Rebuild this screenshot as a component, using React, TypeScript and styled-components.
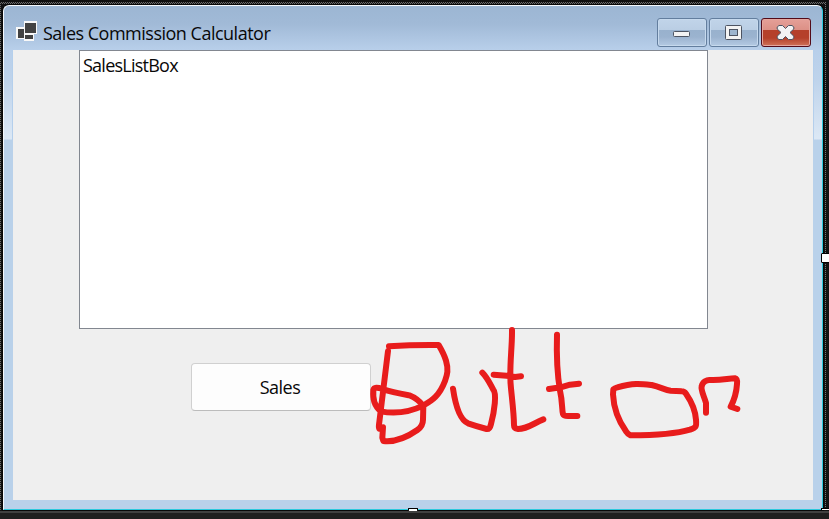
import React from 'react';
import styled, { createGlobalStyle } from 'styled-components';

const GlobalStyle = createGlobalStyle`
  * { box-sizing: border-box; }
  body { margin: 0; background: #1f1f1f; font-family: "Open Sans", "Noto Sans", sans-serif; color: #080808; }
`;

const Designer = styled.main`
  position: relative;
  width: 829px;
  height: 519px;
  overflow: hidden;
  padding: 5px 0 0 3px;
  background: #1f1f1f;
`;

const dots = 'repeating-conic-gradient(#6a6a6a 0 25%, #161616 0 50%) 0 0 / 2px 2px';

const SelectionEdge = styled.div<{ $side: 'top' | 'left' | 'right' }>`
  position: absolute;
  background: ${dots};
  ${({ $side }) =>
    $side === 'top'
      ? 'left: 0; top: 2px; width: 826px; height: 2px;'
      : $side === 'left'
        ? 'left: 0; top: 2px; width: 1px; height: 508px;'
        : 'left: 825px; top: 2px; width: 1px; height: 508px; background: repeating-linear-gradient(#777 0 1px, #161616 1px 2px);'}
`;

const BottomEdge = styled.div`
  position: absolute;
  left: 0;
  top: 510px;
  width: 829px;
  height: 3px;
  background: linear-gradient(#111 0 1px, #404040 1px);
`;

const DarkMargin = styled.div`
  position: absolute;
  inset: 0 0 9px 0;
  background: #111;
`;

const WindowFrame = styled.section`
  position: relative;
  display: flex;
  flex-direction: column;
  width: 820px;
  height: 505px;
  border: 1px solid #f4f8fc;
  border-right-color: #2bc8dc;
  border-bottom-color: #2bc8dc;
  border-radius: 6px 6px 0 0;
  padding: 0 9px 9px 9px;
  background:
    linear-gradient(#b4cfec, #b4cfec) 8px 44px / 1px 90px no-repeat,
    linear-gradient(#b4cfec, #b4cfec) 809px 44px / 1px 90px no-repeat,
    linear-gradient(#9cb6d3 0, #a1bad7 18px, #b8cfea 44px, #bed3eb 74px, #dce8f5 133px, #b9d1ea 134px);
  box-shadow: 0 0 0 1px #080808;
`;

const TitleBar = styled.header`
  display: flex;
  height: 44px;
  flex: none;
  padding-left: 3px;
`;

const FormIcon = styled.svg`
  width: 21px;
  height: 20px;
  margin-top: 15px;
  flex: none;
`;

const Title = styled.h1`
  margin: 14px auto 0 6px;
  font-size: 18px;
  line-height: 26px;
  font-weight: 400;
  letter-spacing: -0.5px;
  white-space: nowrap;
`;

const Controls = styled.div`
  display: flex;
  gap: 2px;
  margin: 12px 2px 0 0;
`;

const ControlButton = styled.button<{ $danger?: boolean }>`
  width: 50px;
  height: 29px;
  padding: 0;
  display: flex;
  border: 1px solid ${({ $danger }) => ($danger ? '#530b19' : '#637e9e')};
  border-radius: 3px;
  box-shadow: inset 0 0 0 1px ${({ $danger }) => ($danger ? '#e4a69e' : '#c6d9ed')};
  background: ${({ $danger }) =>
    $danger
      ? 'linear-gradient(#e5a098 0, #dc9086 11px, #b5402a 11px, #b5402a 19px, #cf7258 27px)'
      : 'linear-gradient(#c1d4e9 0, #bacee4 11px, #98b1cd 11px, #9bb3cf 18px, #b4cae3 27px)'};
  svg { width: 48px; height: 27px; display: block; }
`;

const Form = styled.div`
  flex: none;
  width: 800px;
  height: 450px;
  display: flex;
  flex-direction: column;
  background: #efefef;
`;

const ListBox = styled.div`
  width: 629px;
  height: 279px;
  margin-left: 66px;
  padding: 1px 3px;
  border: 1px solid #828790;
  background: #fff;
  font-size: 18px;
  line-height: 26px;
  letter-spacing: -0.76px;
`;

const SalesButton = styled.button`
  width: 180px;
  height: 48px;
  margin: 34px 0 0 178px;
  padding: 0 2px 0 0;
  border: 1px solid #d0d0d0;
  border-bottom-color: #bcbcbc;
  border-radius: 4px;
  background: #fdfdfd;
  color: #080808;
  font: 18px/26px "Open Sans", "Noto Sans", sans-serif;
  letter-spacing: -0.5px;
`;

const Handle = styled.i<{ $bottom?: boolean }>`
  position: absolute;
  left: ${({ $bottom }) => ($bottom ? 408 : 821)}px;
  top: ${({ $bottom }) => ($bottom ? 508 : 253)}px;
  width: 10px;
  height: ${({ $bottom }) => ($bottom ? 3 : 10)}px;
  border: 1px solid #000;
  ${({ $bottom }) => $bottom && 'border-bottom: 0;'}
  border-radius: 1px;
  background: #fff;
`;

const CornerHandle = styled.i`
  position: absolute;
  left: 821px;
  top: 508px;
  width: 8px;
  height: 2px;
  border-top: 1px solid #000;
  border-left: 1px solid #000;
  background: #fff;
`;

const Ink = styled.svg`
  position: absolute;
  left: 360px;
  top: 320px;
  width: 400px;
  height: 135px;
  fill: none;
  stroke: #e81c1c;
  stroke-width: 18px;
  stroke-linecap: round;
  stroke-linejoin: round;
  pointer-events: none;
`;

const glyph = { fill: '#f3f3f3', stroke: '#4d5462', strokeWidth: 1 };

export default function App() {
  return (
    <Designer>
      <GlobalStyle />
      <DarkMargin />
      <SelectionEdge $side="top" />
      <SelectionEdge $side="left" />
      <SelectionEdge $side="right" />
      <BottomEdge />
      <WindowFrame>
        <TitleBar>
          <FormIcon viewBox="0 0 21 20">
            <path d="M0 6h8V0h13v13h-3v7H8v-2H0z" fill="#f8f8f8" />
            <path d="M9 2h11v10H9zM2 8h6v9H2zM9 14h8v4H9z" fill="#424242" />
          </FormIcon>
          <Title>Sales Commission Calculator</Title>
          <Controls>
            <ControlButton aria-label="Minimize">
              <svg viewBox="0 0 48 27"><rect x="15.5" y="12.5" width="16" height="5" rx="1" {...glyph} /></svg>
            </ControlButton>
            <ControlButton aria-label="Maximize">
              <svg viewBox="0 0 48 27">
                <rect x="15.5" y="6.5" width="16" height="14" rx="1" {...glyph} />
                <rect x="19.5" y="10.5" width="8" height="6" {...glyph} fill="#9eb6cf" />
              </svg>
            </ControlButton>
            <ControlButton $danger aria-label="Close">
              <svg viewBox="0 0 48 27">
                <path d="M17 6.5h3.5l3 3 3-3H30L31.8 8v2L28 13.5l3.8 3.7v2L30 20.5h-3.5l-3-3-3 3H17l-1.8-1.3v-2l3.8-3.7-3.8-3.5V8z" {...glyph} strokeLinejoin="round" />
              </svg>
            </ControlButton>
          </Controls>
        </TitleBar>
        <Form>
          <ListBox>SalesListBox</ListBox>
          <SalesButton>Sales</SalesButton>
        </Form>
      </WindowFrame>
      <Handle />
      <Handle $bottom />
      <CornerHandle />
      <Ink viewBox="0 0 1200 405">
        <path d="M87 79 Q160 74 236 75 C246 92 253 105 258 122 C266 149 262 164 255 183 C238 228 216 241 191 256 C152 275 113 284 62 274 C43 257 38 239 40 210 C42 201 52 202 68 207 C95 217 119 221 148 226 C168 234 181 246 190 258 L189 299 C189 310 183 322 172 330 C139 353 105 367 70 363 L67 353 L69 322 L58 326 C55 322 57 315 58 306 L84 93" />
        <path d="M279 206 C285 247 298 299 324 310 Q350 319 380 327 C389 328 391 321 393 312 C404 272 410 221 400 209 C391 193 382 173 367 158" />
        <path d="M456 30 C457 85 446 150 453 205 C457 245 462 285 462 316 Q462 326 474 327 C503 327 522 309 550 298 M401 164 L440 167 L465 171 L483 169" />
        <path d="M591 44 C589 110 592 165 600 212 C608 247 605 266 609 282 Q611 288 624 288 L652 288 M567 207 L602 202 L630 194 L657 191" />
        <path d="M760 208 Q764 204 772 202 C821 188 842 191 875 195 C904 202 915 210 932 212 L965 214 Q973 214 978 221 C994 244 1006 271 1008 299 C1010 321 1008 322 990 329 C941 344 884 346 811 346 Q804 343 798 334 C774 300 761 264 759 223 Z" />
        <path d="M1038 278 V249 C1032 228 1022 211 1025 199 C1028 185 1041 179 1050 180 C1082 182 1106 175 1125 175 C1131 176 1132 182 1131 192 C1129 225 1120 245 1112 260 L1132 267" />
      </Ink>
    </Designer>
  );
}
